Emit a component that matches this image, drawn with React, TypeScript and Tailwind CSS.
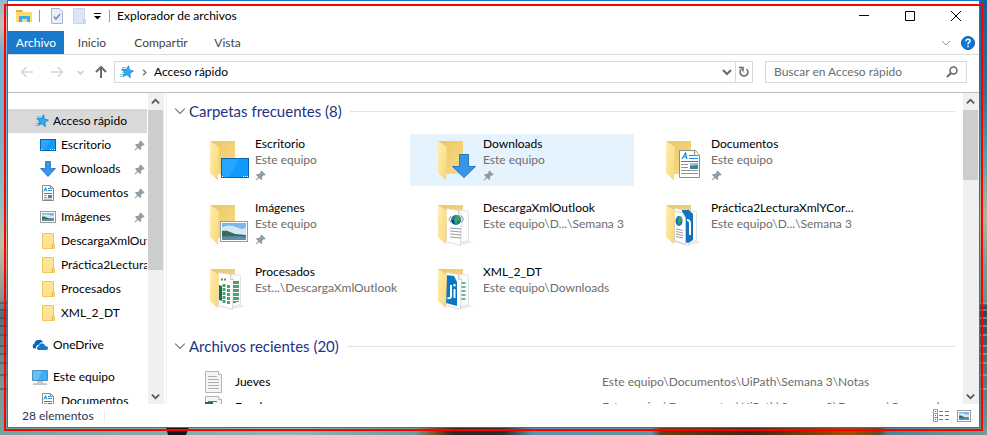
import React from "react";

type IconName = "desktop" | "download" | "document" | "image" | "folder";
type Overlay = "desktop" | "download" | "document" | "image" | "web" | "webUi" | "sheets" | "uipath";

function Scenery() {
  const stripes = [302, 309, 317, 325, 334, 345, 353, 362, 374, 388];
  return (
    <svg aria-hidden="true" className="absolute inset-0 h-full w-full" viewBox="0 0 987 435" preserveAspectRatio="none">
      <defs>
        <linearGradient id="skyL" x1="0" y1="0" x2="0" y2="1">
          <stop offset="0" stopColor="#8fb9cf" />
          <stop offset=".06" stopColor="#c9c0b4" />
          <stop offset=".12" stopColor="#6fb0d6" />
          <stop offset=".3" stopColor="#7fadc9" />
          <stop offset=".46" stopColor="#8dbec5" />
          <stop offset=".56" stopColor="#c2bea6" />
          <stop offset=".68" stopColor="#8f9492" />
          <stop offset=".72" stopColor="#52707c" />
          <stop offset=".88" stopColor="#7d9797" />
          <stop offset="1" stopColor="#6fa5a2" />
        </linearGradient>
        <linearGradient id="skyR" x1="0" y1="0" x2="0" y2="1">
          <stop offset="0" stopColor="#15609a" />
          <stop offset=".22" stopColor="#3f6f8f" />
          <stop offset=".36" stopColor="#5b9fa8" />
          <stop offset=".5" stopColor="#b9b498" />
          <stop offset=".6" stopColor="#7f9d93" />
          <stop offset=".69" stopColor="#6d8f8c" />
          <stop offset=".71" stopColor="#2e464e" />
          <stop offset=".84" stopColor="#57706f" />
          <stop offset="1" stopColor="#6f9b97" />
        </linearGradient>
        <linearGradient id="sea" x1="0" y1="0" x2="1" y2="0">
          <stop offset="0" stopColor="#6fa5a2" />
          <stop offset=".3" stopColor="#86b9b8" />
          <stop offset=".42" stopColor="#6f9c98" />
          <stop offset=".44" stopColor="#7a5230" />
          <stop offset=".46" stopColor="#2b2422" />
          <stop offset=".51" stopColor="#2b2a2a" />
          <stop offset=".54" stopColor="#5596ab" />
          <stop offset=".66" stopColor="#5f95a5" />
          <stop offset=".67" stopColor="#6b3c14" />
          <stop offset=".76" stopColor="#3d2716" />
          <stop offset=".86" stopColor="#a34d0c" />
          <stop offset=".89" stopColor="#5d4a2c" />
          <stop offset=".9" stopColor="#4b8496" />
          <stop offset="1" stopColor="#6f9b97" />
        </linearGradient>
      </defs>
      <rect width="500" height="435" fill="url(#skyL)" />
      <rect x="500" width="487" height="435" fill="url(#skyR)" />
      {stripes.map((y) => (
        <g key={y} opacity=".5">
          <rect y={y} width="8" height="2" fill="#2f4a57" />
          <rect x="979" y={y} width="8" height="2" fill="#b5c0b8" />
        </g>
      ))}
      <rect y="427" width="987" height="8" fill="url(#sea)" />
      <path d="M166 427h23l-3 8h-18z" fill="#161616" />
    </svg>
  );
}

function Pin({ className = "" }: { className?: string }) {
  return (
    <svg aria-hidden="true" className={className} width="11" height="11" viewBox="0 0 11 11">
      <path d="M6.500.5 10.500 4.500l-.6.9-1.200-.1L7 7l.1 2.200-1 .8L4 7.900 1 10.500l-.5-.5L3.100 7 1 5l.8-1L4 4l1.700-1.700L5.600 1z" fill="#929ca4" />
    </svg>
  );
}

function QuickStar({ className = "" }: { className?: string }) {
  return (
    <svg aria-hidden="true" className={className} width="16" height="16" viewBox="0 0 16 16">
      <path d="M4 3.500h4M3 6.500h4M4 8.500h3M2 10.500h4M2 12.500h3" stroke="#7cc9f3" strokeWidth="1" fill="none" />
      <path d="M10.600 1.800 11.400 6.100 15.500 7.100 11.900 9.300 12.300 13.700 9 10.700 5 12.400 6.800 8.400 3.900 5 8.300 5.600z" fill="#2fabf0" stroke="#1682cf" strokeWidth=".8" />
    </svg>
  );
}

function DesktopShape({ x, y, w, h }: { x: number; y: number; w: number; h: number }) {
  return (
    <g>
      <rect x={x + 0.5} y={y + 0.5} width={w - 1} height={h - 1} fill="#129bfb" stroke="#0b62a8" />
      <path d={`M${x + 1} ${y + 1}h${w * 0.62}l${-w * 0.38} ${h - 2}h${-w * 0.24}z`} fill="#3aaeff" opacity=".55" />
      <path d={`M${x + 1} ${y + h - 1.5}h2M${x + w - 6} ${y + h - 1.5}h5`} stroke="#fff" strokeDasharray="1 1" />
    </g>
  );
}

function PhotoShape({ x, y, w, h }: { x: number; y: number; w: number; h: number }) {
  const l = x + 2;
  const t = y + 2;
  const iw = w - 4;
  const ih = h - 4;
  return (
    <g>
      <rect x={x + 0.5} y={y + 0.5} width={w - 1} height={h - 1} fill="#fff" stroke="#9a9a9a" />
      <rect x={l} y={t} width={iw} height={ih} fill="#7fb4ee" />
      <path d={`M${l} ${t + ih * 0.25}q${iw * 0.3} ${-ih * 0.2} ${iw * 0.6} 0t${iw * 0.4} 0v${ih * 0.45}h${-iw}z`} fill="#d4e9f8" />
      <path d={`M${l} ${t + ih * 0.45}l${iw * 0.2} 0 ${iw * 0.35} ${ih * 0.2} ${iw * 0.45} ${ih * 0.05}v${ih * 0.12}h${-iw}z`} fill="#3a6b57" />
      <rect x={l} y={t + ih * 0.78} width={iw} height={ih * 0.22} fill="#5f8cab" />
    </g>
  );
}

function SmallIcon({ name }: { name: IconName }) {
  return (
    <svg aria-hidden="true" className="shrink-0" width="16" height="16" viewBox="0 0 16 16">
      {name === "desktop" && <DesktopShape x={0} y={2} w={16} h={12} />}
      {name === "image" && <PhotoShape x={0} y={2} w={16} h={12} />}
      {name === "download" && <path d="M5.500.5h5v7h5L8 15.500.5 7.500h5z" fill="#3894e4" stroke="#1e6fbd" strokeWidth=".8" />}
      {name === "folder" && (
        <g>
          <path d="M2.500.5h11v10l1 1v4h-12z" fill="#ffe394" stroke="#edc85c" />
          <path d="M12.500 15v-3.500l1.500-1" fill="none" stroke="#dcae3c" />
        </g>
      )}
      {name === "document" && (
        <g>
          <path d="M2.500.5h8l3 3v12h-11z" fill="#fff" stroke="#8a8a8a" />
          <path d="M10.500.5v3h3" fill="none" stroke="#8a8a8a" />
          <path d="M4 6.500 5.500 2.500 7 6.500M4.500 5h2M8 3.500h2M8 5.500h4M4 8.500h8" fill="none" stroke="#1b8ed8" />
          <path d="M4 10.500h3M4 12.500h3M4 14.200h8" stroke="#999" />
          <path d="M8 10h4v3H8z" fill="#4c85a8" />
        </g>
      )}
    </svg>
  );
}

function FolderIcon({ overlay }: { overlay: Overlay }) {
  const pages = overlay === "web" || overlay === "sheets" || overlay === "uipath" || overlay === "webUi";
  return (
    <svg aria-hidden="true" className="shrink-0" width="42" height="44" viewBox="0 0 42 44">
      <defs>
        <linearGradient id={`back-${overlay}`} x1="0" y1="0" x2="1" y2="1">
          <stop offset="0" stopColor="#e9c766" />
          <stop offset="1" stopColor="#fbdb85" />
        </linearGradient>
        <linearGradient id={`flap-${overlay}`} x1="0" y1="0" x2="1" y2="1">
          <stop offset="0" stopColor="#ffeeb4" />
          <stop offset="1" stopColor="#f8d672" />
        </linearGradient>
      </defs>
      {pages && <path d="M18 38h13l4 1-10 3h-7z" fill="#ececec" />}
      <path d="M0 2h25v33H4L0 30z" fill={`url(#back-${overlay})`} />
      {pages && (
        <g>
          <path d="M18 7.500h7l5.500 1v29l-12 3z" fill="#fcfcfc" stroke="#e2e2e2" />
          <path d="m8.500 5.500 12 2 3 5-1 30-14-4z" fill="#fff" stroke="#dcdcdc" />
          <path d="m20.500 7.500v5h3" fill="#f3f3f3" stroke="#ccc" />
        </g>
      )}
      {overlay === "web" && (
        <g>
          <circle cx="18" cy="17" r="5" fill="#1f6fc0" />
          <path d="M18 12q5 0 5 4l-3 2-2 4-2-5z" fill="#35a955" />
          <path d="M13.500 17q0 3 3 4.500L16 17z" fill="#123e7c" />
          <path d="m13 13-2 3.500 2 3M23.500 13l2 3.500-2 3" stroke="#8b8b8b" fill="none" />
          <path d="m12 25 11 1m-11 2 11 1m-11 2 11 1m-11 2 11 1" stroke="#9d9d9d" />
        </g>
      )}
      {overlay === "webUi" && (
        <g>
          <path d="M16 7h7l4 4v26l-5 3-6-2z" fill="#1372ba" />
          <path d="M21 17q3 0 3 4v11" fill="none" stroke="#fff" strokeWidth="2" />
          <path d="m8.500 8.500 8 1 3 5v27l-11-4z" fill="#fff" stroke="#ccc" />
          <ellipse cx="13" cy="18" rx="3.500" ry="5" fill="#1f6fc0" />
          <path d="M13 13q3 0 3.500 4l-2 2-1.500 3-1-4z" fill="#35a955" />
          <path d="m10 26 7 1.500m-7 1 7 1.500m-7 1 7 1.500m-7 1 7 1.500" stroke="#9d9d9d" />
        </g>
      )}
      {overlay === "sheets" && (
        <g>
          <path d="m9 18 3 1v15l-3-1z" fill="#177245" />
          <path d="M11 12.500h6" stroke="#777" strokeWidth="2" strokeDasharray="2 1" />
          <path d="M14 17v19M18.500 18v20M24.500 14v22M27.500 14v21" stroke="#4fa075" strokeWidth="3" strokeDasharray="3 1" />
        </g>
      )}
      {overlay === "uipath" && (
        <g>
          <path d="M25.500 15v20" stroke="#6bb68c" strokeWidth="4" strokeDasharray="2 2" />
          <path d="m8 8 8 1 3 6v24l-11-3z" fill="#0877c4" />
          <path d="M13 18v11q0 3-3.500 2M16.500 22v9M16.500 17v2.500" fill="none" stroke="#fff" strokeWidth="2" />
        </g>
      )}
      <path d="m0 2 9 6-1 33.500L0 34z" fill={`url(#flap-${overlay})`} />
      {overlay === "desktop" && <DesktopShape x={11} y={19} w={28} h={20} />}
      {overlay === "image" && <PhotoShape x={10} y={18} w={28} h={21} />}
      {overlay === "download" && <path d="M21.500 15.500h9v12h7L26 38.500 14.500 27.500h7z" fill="#3894e4" stroke="#2379c9" />}
      {overlay === "document" && (
        <g>
          <path d="M13.500 11.500h16l4 5v22h-20z" fill="#fff" stroke="#8c8c8c" />
          <path d="M28.500 11.500v5h5" fill="#eee" stroke="#8c8c8c" />
          <path d="m16 20 3.500-6 1.500 6m-4-2h3.500M23 16.500h5M23 19.500h9M15 22.500h17" fill="none" stroke="#168bd8" strokeWidth="1.200" />
          <path d="M15 25.500h7M15 28.500h7M15 31.500h17M15 34.500h17" stroke="#949494" />
          <path d="M24 24h8v6h-8z" fill="#427d93" />
          <path d="M24 24h8v2l-8 1z" fill="#8cc4ec" />
        </g>
      )}
    </svg>
  );
}

function Chevron({ dir, color = "#555", size = 10, stroke = 1 }: { dir: "up" | "down" | "right"; color?: string; size?: number; stroke?: number }) {
  const d = dir === "up" ? "M1 7l4-4 4 4" : dir === "down" ? "M1 3l4 4 4-4" : "M3 1l4 4-4 4";
  return (
    <svg aria-hidden="true" className="shrink-0" width={size} height={size} viewBox="0 0 10 10">
      <path d={d} fill="none" stroke={color} strokeWidth={stroke} />
    </svg>
  );
}

function ScrollBar({ label, thumb }: { label: string; thumb: string }) {
  return (
    <div className="flex w-4 shrink-0 flex-col bg-[#f0f0f0]">
      <button aria-label={`Subir ${label}`} className="flex h-[17px] shrink-0 items-center justify-center pr-px">
        <Chevron dir="up" stroke={2} size={9} />
      </button>
      <div className="min-h-0 flex-1">
        <div className={`w-[15px] bg-[#cdcdcd] ${thumb}`} />
      </div>
      <button aria-label={`Bajar ${label}`} className="flex h-4 shrink-0 items-center justify-center pr-px">
        <Chevron dir="down" stroke={2} size={9} />
      </button>
    </div>
  );
}

const sideItems: { icon: IconName; name: string; pinned?: boolean }[] = [
  { icon: "desktop", name: "Escritorio", pinned: true },
  { icon: "download", name: "Downloads", pinned: true },
  { icon: "document", name: "Documentos", pinned: true },
  { icon: "image", name: "Imágenes", pinned: true },
  { icon: "folder", name: "DescargaXmlOutlook" },
  { icon: "folder", name: "Práctica2LecturaXmlYCorreo" },
  { icon: "folder", name: "Procesados" },
  { icon: "folder", name: "XML_2_DT" },
];

const folders: { overlay: Overlay; name: string; path: string; pinned?: boolean; active?: boolean }[] = [
  { overlay: "desktop", name: "Escritorio", path: "Este equipo", pinned: true },
  { overlay: "download", name: "Downloads", path: "Este equipo", pinned: true, active: true },
  { overlay: "document", name: "Documentos", path: "Este equipo", pinned: true },
  { overlay: "image", name: "Imágenes", path: "Este equipo", pinned: true },
  { overlay: "web", name: "DescargaXmlOutlook", path: "Este equipo\\D...\\Semana 3" },
  { overlay: "webUi", name: "Práctica2LecturaXmlYCor...", path: "Este equipo\\D...\\Semana 3" },
  { overlay: "sheets", name: "Procesados", path: "Est...\\DescargaXmlOutlook" },
  { overlay: "uipath", name: "XML_2_DT", path: "Este equipo\\Downloads" },
];

function SideItem({ icon, name, pinned }: { icon: IconName; name: string; pinned?: boolean }) {
  return (
    <li>
      <a href="#" className="mr-px flex h-6 items-center gap-[5px] pl-8">
        <SmallIcon name={icon} />
        <span className="min-w-0 flex-1 overflow-hidden whitespace-nowrap">{name}</span>
        {pinned && <Pin className="mr-[2px] shrink-0" />}
      </a>
    </li>
  );
}

function GroupHeader({ children }: { children: React.ReactNode }) {
  return (
    <h2 className="flex h-6 items-center text-[15px] text-[#1e3287]">
      <Chevron dir="down" color="#777" size={12} />
      <span className="ml-[3px]">{children}</span>
      <span className="ml-2 h-px flex-1 bg-[#e2e2e2]" />
    </h2>
  );
}

function Sidebar() {
  return (
    <nav aria-label="Panel de navegación" className="min-w-0 flex-1 overflow-hidden pt-4">
      <a href="#" className="mr-px flex h-6 items-center gap-[4px] bg-[#d9d9d9] pl-[25px]">
        <QuickStar />
        Acceso rápido
      </a>
      <ul>
        {sideItems.map((item) => (
          <SideItem key={item.name} {...item} />
        ))}
      </ul>
      <a href="#" className="mt-2 flex h-6 items-center gap-[5px] pl-6">
        <svg aria-hidden="true" width="16" height="16" viewBox="0 0 16 16">
          <path d="M1.500 11.500Q-.5 8 2.500 6.500 3 2.500 7 3q2-1 4 2-3 0-4.500 3Q4 7.500 4 11.500z" fill="#0a64b5" />
          <path d="M6 13q-2.500-2 .5-4Q8 5.500 11 6.500q2 .5 2 2.500 3 0 3 2.200 0 1.800-2 1.800z" fill="#1079d0" />
        </svg>
        OneDrive
      </a>
      <a href="#" className="mt-2 flex h-6 items-center gap-[5px] pl-6">
        <svg aria-hidden="true" width="16" height="16" viewBox="0 0 16 16">
          <path d="M.5 1.500h15v10H.5z" fill="#3daff2" stroke="#4b8db5" />
          <path d="M1 2h9l-4 9H1z" fill="#7dcdfa" opacity=".6" />
          <path d="M5 13h6M1 15h14" stroke="#82949f" />
        </svg>
        Este equipo
      </a>
      <ul>
        <SideItem icon="document" name="Documentos" />
      </ul>
    </nav>
  );
}

function RecentRow({ name, path, sheet }: { name: string; path: string; sheet?: boolean }) {
  return (
    <li className="flex h-[25px] items-center pl-[31px]">
      <svg aria-hidden="true" className="w-[18px] shrink-0" width="18" height="22" viewBox="0 0 18 22">
        <path d="M.5.500h13l3 3v18H.5z" fill="#f4f4f4" stroke="#b5b5b5" />
        <path d="M13.500.5v3h3" fill="#fff" stroke="#b5b5b5" />
        <path d="M3 5.500h9M3 8.500h11M3 11.500h11M3 14.500h11M3 17.500h11" stroke={sheet ? "#3f8f65" : "#b0b0b0"} />
        {sheet && <path d="M0 6h8v12H0z" fill="#217346" />}
      </svg>
      <span className="ml-3 w-[367px] shrink-0">{name}</span>
      <span className="whitespace-nowrap text-[#6d6d6d]">{path}</span>
    </li>
  );
}

export default function App() {
  return (
    <div className="relative h-screen overflow-hidden pr-[7px] pb-[7px] pl-[7px] font-['Lato','Open_Sans',sans-serif] text-[12px] leading-4 text-black">
      <Scenery />
      <main className="relative flex h-full flex-col border border-[#1879c9] bg-white">
        <header className="flex h-[30px] shrink-0 items-center pl-2">
          <svg aria-hidden="true" width="17" height="14" viewBox="0 0 17 14">
            <path d="M0 1h6l1 2h9v10H0z" fill="#ffd96c" />
            <path d="M0 1h6l1 2H0z" fill="#e4ae32" />
            <path d="M3 13V7h11v6h-3v-3H6v3z" fill="#39aee8" />
          </svg>
          <span className="ml-1.5 h-3 w-px bg-[#999]" />
          <button aria-label="Propiedades" className="ml-[11px]">
            <svg aria-hidden="true" width="12" height="16" viewBox="0 0 12 16">
              <path d="M.5.500h8l3 3v12H.5z" fill="#e9f0fa" stroke="#a7b5ce" />
              <path d="m3 8.500 2 2.500 4-5" fill="none" stroke="#7889ac" strokeWidth="1.500" />
            </svg>
          </button>
          <button aria-label="Nueva carpeta" className="ml-2.5">
            <svg aria-hidden="true" width="13" height="16" viewBox="0 0 13 16">
              <path d="M.5.500h11v10l1 1v4H.5z" fill="#dce5f4" stroke="#c9d5e9" />
              <path d="M10.500 15v-4" stroke="#bac9e2" />
            </svg>
          </button>
          <button aria-label="Personalizar barra" className="ml-2">
            <svg aria-hidden="true" width="7" height="8" viewBox="0 0 7 8">
              <path d="M0 1.500h7" stroke="#000" />
              <path d="M0 4h7L3.500 7.500z" />
            </svg>
          </button>
          <span className="ml-2 h-3 w-px bg-[#999]" />
          <h1 className="ml-[7px] flex-1">Explorador de archivos</h1>
          <button aria-label="Minimizar" className="flex h-full w-[46px] items-center justify-center">
            <svg aria-hidden="true" width="10" height="10" viewBox="0 0 10 10">
              <path d="M0 4.500h10" stroke="#000" />
            </svg>
          </button>
          <button aria-label="Maximizar" className="flex h-full w-[46px] items-center justify-center">
            <svg aria-hidden="true" width="10" height="10" viewBox="0 0 10 10">
              <path d="M.5.500h9v9h-9z" fill="none" stroke="#000" />
            </svg>
          </button>
          <button aria-label="Cerrar" className="flex h-full w-[46px] items-center justify-center">
            <svg aria-hidden="true" width="10" height="10" viewBox="0 0 10 10">
              <path d="m0 0 10 10M10 0 0 10" stroke="#000" />
            </svg>
          </button>
        </header>

        <div className="flex h-6 shrink-0 items-stretch border-b border-[#dadbdc] text-[#444]">
          <button className="w-14 bg-[#1979ca] text-white">Archivo</button>
          <button className="w-14">Inicio</button>
          <button className="w-[82px]">Compartir</button>
          <button className="w-[51px]">Vista</button>
          <span className="flex-1" />
          <button aria-label="Expandir la cinta" className="px-1">
            <Chevron dir="down" color="#999" size={10} />
          </button>
          <button aria-label="Ayuda" className="mr-1 ml-[6px] self-center">
            <svg aria-hidden="true" width="14" height="14" viewBox="0 0 14 14">
              <circle cx="7" cy="7" r="6.500" fill="#0b78d4" stroke="#0a5ea8" />
              <path d="M5 5.200Q5 3.300 7 3.300t2 1.700Q9 6 7.800 6.600 7 7.200 7 8.500M7 9.800v1.500" fill="none" stroke="#fff" strokeWidth="1.500" />
            </svg>
          </button>
        </div>

        <div className="flex h-[38px] shrink-0 items-center border-b border-[#bcbcbc] px-3 pb-[3px]">
          <button aria-label="Atrás">
            <svg aria-hidden="true" width="14" height="12" viewBox="0 0 14 12">
              <path d="M13 6H2m4.500-5L1.500 6l5 5" fill="none" stroke="#d6d6d6" strokeWidth="1.500" />
            </svg>
          </button>
          <button aria-label="Adelante" className="ml-4">
            <svg aria-hidden="true" width="14" height="12" viewBox="0 0 14 12">
              <path d="M1 6h11M7.500 1l5 5-5 5" fill="none" stroke="#d6d6d6" strokeWidth="1.500" />
            </svg>
          </button>
          <button aria-label="Ubicaciones recientes" className="ml-[13px]">
            <Chevron dir="down" color="#c6c6c6" size={7} stroke={2} />
          </button>
          <button aria-label="Arriba" className="ml-[11px]">
            <svg aria-hidden="true" width="12" height="14" viewBox="0 0 12 14">
              <path d="M6 13V2M1 7l5-5 5 5" fill="none" stroke="#6b6b6b" strokeWidth="2" />
            </svg>
          </button>
          <div className="ml-[7px] flex h-[22px] flex-1 items-center border border-[#d9d9d9] pl-[3px]">
            <QuickStar />
            <span className="ml-[7px] flex w-[8px]">
              <Chevron dir="right" color="#777" size={7} stroke={2} />
            </span>
            <a href="#" className="ml-[5px] flex-1">
              Acceso rápido
            </a>
            <button aria-label="Historial" className="mr-[3px]">
              <Chevron dir="down" color="#666" size={10} stroke={2} />
            </button>
            <button aria-label="Actualizar" className="flex h-full w-[17px] items-center justify-center border-l border-[#d9d9d9]">
              <svg aria-hidden="true" width="12" height="12" viewBox="0 0 12 12">
                <path d="M8.500 3a4 4 0 1 1-5 0" fill="none" stroke="#666" strokeWidth="1.500" />
                <path d="M1 1.500h4v4" fill="none" stroke="#666" strokeWidth="1.500" />
              </svg>
            </button>
          </div>
          <div className="ml-3 flex h-[22px] w-[202px] items-center border border-[#d9d9d9] pr-2 pl-2">
            <input aria-label="Buscar" className="min-w-0 flex-1 outline-none placeholder:text-[#6d6d6d] placeholder:opacity-100" placeholder="Buscar en Acceso rápido" />
            <svg aria-hidden="true" width="12" height="12" viewBox="0 0 12 12">
              <circle cx="7.500" cy="4.500" r="3.500" fill="none" stroke="#666" strokeWidth="1.500" />
              <path d="M5 7 1 11" stroke="#666" strokeWidth="2" />
            </svg>
          </div>
        </div>

        <div className="flex min-h-0 flex-1">
          <div className="flex w-[159px] shrink-0 border-r border-[#f0f0f0] pr-[2px]">
            <Sidebar />
            <ScrollBar label="panel" thumb="h-40" />
          </div>
          <section aria-label="Contenido" className="min-w-0 flex-1 overflow-hidden pt-[6px] pr-2 pl-[7px]">
            <GroupHeader>Carpetas frecuentes (8)</GroupHeader>
            <ul className="mt-[11px] ml-2 grid grid-cols-[repeat(auto-fill,224px)] gap-x-1 gap-y-3">
              {folders.map((f) => (
                <li key={f.name} className={`flex h-[52px] pl-7 ${f.active ? "bg-[#e5f3ff]" : ""}`}>
                  <span className="mt-[5px]">
                    <FolderIcon overlay={f.overlay} />
                  </span>
                  <div className="ml-[3px] whitespace-nowrap pt-0.5">
                    <p>{f.name}</p>
                    <p className="text-[#6d6d6d]">{f.path}</p>
                    {f.pinned && <Pin className="mt-[2px]" />}
                  </div>
                </li>
              ))}
            </ul>
            <div className="mt-5">
              <GroupHeader>Archivos recientes (20)</GroupHeader>
            </div>
            <ul className="mt-[11px]">
              <RecentRow name="Jueves" path={"Este equipo\\Documentos\\UiPath\\Semana 3\\Notas"} />
              <RecentRow sheet name="Excel" path={"Este equipo\\Documentos\\UiPath\\Semana 3\\Descarga\\Procesados"} />
            </ul>
          </section>
          <ScrollBar label="contenido" thumb="h-[70px]" />
        </div>

        <footer className="flex h-[23px] shrink-0 items-center pr-2 pl-[14px] text-[#1f3558]">
          <span>28 elementos</span>
          <span className="ml-2.5 h-3 w-px bg-[#ededed]" />
          <span className="flex-1" />
          <button aria-label="Vista detalles" className="mr-[7px]">
            <svg aria-hidden="true" width="17" height="14" viewBox="0 0 17 14">
              <path d="M.5.500h4v12h-4zM.5 4.500h4M.5 8.500h4" fill="none" stroke="#999" />
              <path d="M6 2.500h4m2 0h4m-10 4h4m2 0h4m-10 4h4m2 0h4" stroke="#777" />
              <path d="M2 2h1v1H2z" fill="#208040" />
              <path d="M2 6h1v1H2z" fill="#2070e0" />
              <path d="M2 10h1v1H2z" fill="#e02020" />
            </svg>
          </button>
          <button aria-label="Vista iconos grandes">
            <svg aria-hidden="true" width="14" height="12" viewBox="0 0 14 12">
              <PhotoShape x={0} y={0} w={14} h={12} />
            </svg>
          </button>
        </footer>
      </main>
      <div className="pointer-events-none absolute top-1 right-[4px] bottom-1 left-1 border-2 border-[#ff0000]" />
    </div>
  );
}
